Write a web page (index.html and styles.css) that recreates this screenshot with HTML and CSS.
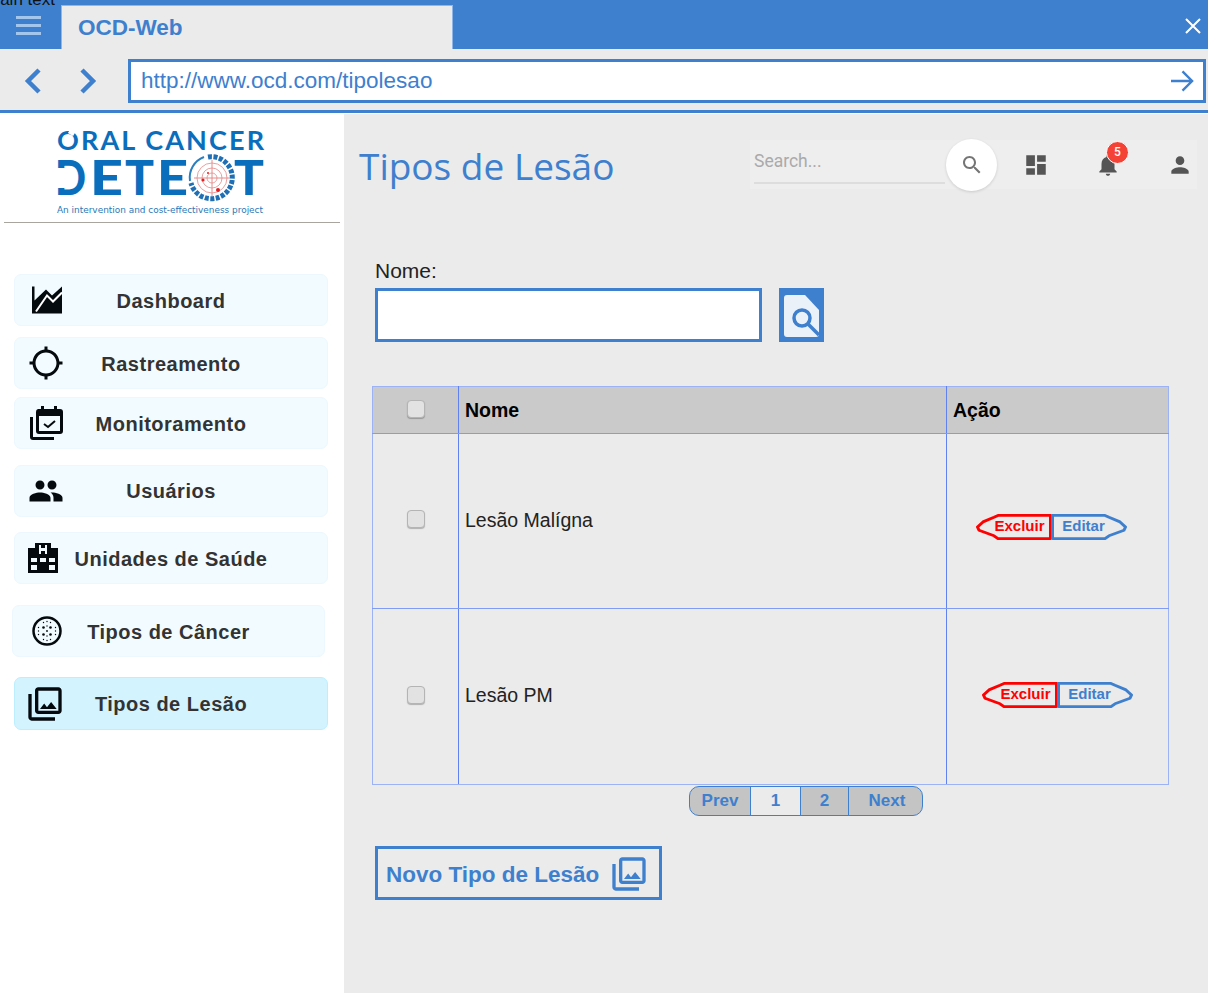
FILE: index.html
```html
<!DOCTYPE html>
<html lang="pt">
<head>
<meta charset="utf-8">
<title>OCD-Web</title>
<link rel="stylesheet" href="styles.css">
</head>
<body>
<span class="stray">Main text</span>
<header class="topbar">
  <button class="burger" aria-label="Menu"><span></span><span></span><span></span></button>
  <div class="tab">OCD-Web</div>
  <svg class="close" viewBox="0 0 16 16"><path d="M1 1l14 14M15 1L1 15"/></svg>
</header>
<div class="addressbar">
  <svg class="chev" viewBox="0 0 20 28"><path d="M16 3L5 14l11 11"/></svg>
  <svg class="chev chev-next" viewBox="0 0 20 28"><path d="M4 3l11 11L4 25"/></svg>
  <div class="url">
    <span>http://www.ocd.com/tipolesao</span>
    <svg class="go" viewBox="0 0 24 24"><path d="M0 12h22M12 2l10 10-10 10"/></svg>
  </div>
</div>
<div class="layout">
  <aside class="sidebar">
    <div class="logo">
      <svg viewBox="0 0 344 109" width="344" height="109">
        <text class="logo-a" x="57" y="37" textLength="207" lengthAdjust="spacing">ORAL CANCER</text>
        <rect x="69" y="16" width="6" height="6" fill="#fff" transform="rotate(30 72 19)"/>
        <text class="logo-b" x="55" y="82" textLength="31" lengthAdjust="spacingAndGlyphs">D</text>
        <text class="logo-b" x="90" y="82" textLength="33" lengthAdjust="spacingAndGlyphs">E</text>
        <text class="logo-b" x="125" y="82" textLength="29" lengthAdjust="spacingAndGlyphs">T</text>
        <text class="logo-b" x="157" y="82" textLength="31" lengthAdjust="spacingAndGlyphs">E</text>
        <text class="logo-b" x="234" y="82" textLength="30" lengthAdjust="spacingAndGlyphs">T</text>
        <rect x="55" y="55" width="12" height="20" fill="#fff"/>
        <circle cx="212" cy="65" r="24" fill="#fff"/>
        <path d="M190 68a22 22 0 0 1 14-24" fill="none" stroke="#2a7fc0" stroke-width="2"/>
        <path d="M208 44a21 21 0 1 1-17 26" fill="none" stroke="#1f6fb5" stroke-width="5" stroke-dasharray="4 1.500"/>
        <circle cx="212" cy="65" r="15" fill="#fff" stroke="#e8a0a0"/>
        <circle cx="212" cy="65" r="10" fill="none" stroke="#e8a0a0"/>
        <circle cx="212" cy="65" r="5" fill="none" stroke="#e8a0a0"/>
        <path d="M194 65h36M212 47v36" stroke="#e88a8a" stroke-width="1"/>
        <circle cx="203" cy="67" r="1.600" fill="#e02020"/>
        <circle cx="208" cy="60" r="1" fill="#e02020"/>
        <circle cx="218" cy="77" r="2" fill="#e02020"/>
        <text class="logo-c" x="57" y="100" textLength="206" lengthAdjust="spacingAndGlyphs">An intervention and cost-effectiveness project</text>
      </svg>
    </div>
    <nav class="nav">
      <a class="item item-dashboard">
        <svg class="ico ico-30" viewBox="0 0 30 27"><path d="M0 0h2.500v14L14 3l6 6L30 0v27H0z"/><path class="cut" d="M4 25L15 9l6 6 9-9"/></svg>
        <span>Dashboard</span>
      </a>
      <a class="item item-track">
        <svg class="ico ico-36" viewBox="0 0 24 24"><path d="M20.940 11c-.46-4.170-3.770-7.480-7.940-7.940V1h-2v2.060C6.830 3.520 3.520 6.830 3.060 11H1v2h2.060c.46 4.170 3.770 7.480 7.940 7.940V23h2v-2.060c4.170-.46 7.480-3.770 7.940-7.940H23v-2h-2.060zM12 19c-3.870 0-7-3.130-7-7s3.130-7 7-7 7 3.130 7 7-3.130 7-7 7z"/></svg>
        <span>Rastreamento</span>
      </a>
      <a class="item item-monitor">
        <svg class="ico ico-34" viewBox="0 0 34 34"><path d="M8 3h3V0h3v3h10V0h3v3h3a3 3 0 0 1 3 3v19a3 3 0 0 1-3 3H9a3 3 0 0 1-3-3V6a3 3 0 0 1 2-3z"/><rect class="hole" x="9" y="10" width="21" height="15"/><path class="tick" d="M14 18l4 3 7-6"/><path d="M0 11h3v20h21v3H3a3 3 0 0 1-3-3z"/></svg>
        <span>Monitoramento</span>
      </a>
      <a class="item item-users">
        <svg class="ico ico-36" viewBox="0 0 24 24"><path d="M16 11c1.660 0 2.990-1.340 2.990-3S17.660 5 16 5c-1.660 0-3 1.340-3 3s1.340 3 3 3zm-8 0c1.660 0 2.990-1.340 2.990-3S9.660 5 8 5C6.340 5 5 6.340 5 8s1.340 3 3 3zm0 2c-2.330 0-7 1.170-7 3.500V19h14v-2.500c0-2.330-4.670-3.500-7-3.500zm8 0c-.29 0-.62.02-.97.05 1.160.84 1.970 1.970 1.970 3.450V19h6v-2.500c0-2.330-4.670-3.500-7-3.500z"/></svg>
        <span>Usuários</span>
      </a>
      <a class="item item-units">
        <svg class="ico ico-30" viewBox="0 0 30 30"><path d="M7 0h16v5h7v25H0V5h7z"/><path class="hole" d="M11 2h2v3h4V2h2v9h-2V8h-4v3h-2zM3 15h6v4H3zM12 15h6v4h-6zM21 15h6v4h-6zM3 22h6v5H3zM21 22h6v5h-6z"/></svg>
        <span>Unidades de Saúde</span>
      </a>
      <a class="item item-cancer">
        <svg class="ico ico-30" viewBox="0 0 30 30"><circle class="ring" cx="15" cy="15" r="13.500"/><g class="dots"><circle cx="11.500" cy="11.500" r="1.300"/><circle cx="18.500" cy="11.500" r="1.300"/><circle cx="11.500" cy="18.500" r="1.300"/><circle cx="18.500" cy="18.500" r="1.300"/><circle cx="15" cy="5.500" r=".7"/><circle cx="11.500" cy="6.500" r=".7"/><circle cx="18.500" cy="6.500" r=".7"/><circle cx="15" cy="15" r=".9"/><circle cx="6.500" cy="11.500" r=".7"/><circle cx="23.500" cy="11.500" r=".7"/><circle cx="6.500" cy="15" r=".7"/><circle cx="23.500" cy="15" r=".7"/><circle cx="6.500" cy="18.500" r=".7"/><circle cx="23.500" cy="18.500" r=".7"/><circle cx="15" cy="24.500" r=".7"/><circle cx="11.500" cy="23.500" r=".7"/><circle cx="18.500" cy="23.500" r=".7"/><circle cx="15" cy="10" r=".7"/><circle cx="15" cy="20" r=".7"/></g></svg>
        <span>Tipos de Câncer</span>
      </a>
      <a class="item item-lesion">
        <svg class="ico ico-40" viewBox="0 0 24 24"><path d="M20 4v12H8V4h12m0-2H8c-1.100 0-2 .9-2 2v12c0 1.100.9 2 2 2h12c1.100 0 2-.9 2-2V4c0-1.100-.9-2-2-2zm-8.500 9.670l1.690 2.260 2.480-3.100L19 15H9zM2 6v14c0 1.100.9 2 2 2h14v-2H4V6H2z"/></svg>
        <span>Tipos de Lesão</span>
      </a>
    </nav>
  </aside>
  <main class="main">
    <div class="head">
      <h1 class="title">Tipos de Lesão</h1>
      <div class="tools">
        <input class="search" type="text" placeholder="Search...">
        <button class="search-btn" aria-label="Search"><svg viewBox="0 0 24 24"><path d="M15.500 14h-.790l-.280-.270C15.410 12.590 16 11.110 16 9.500 16 5.910 13.090 3 9.500 3S3 5.910 3 9.500 5.910 16 9.500 16c1.610 0 3.090-.590 4.230-1.570l.270.280v.790l5 4.990L20.490 19l-4.990-5zm-6 0C7.010 14 5 11.990 5 9.500S7.010 5 9.500 5 14 7.010 14 9.500 11.990 14 9.500 14z"/></svg></button>
        <button class="tool tool-first" aria-label="Painel"><svg viewBox="0 0 24 24"><path d="M3 13h8V3H3v10zm0 8h8v-6H3v6zm10 0h8V11h-8v10zm0-18v6h8V3h-8z"/></svg></button>
        <button class="tool" aria-label="Notificações"><svg viewBox="0 0 24 24"><path d="M12 22c1.100 0 2-.9 2-2h-4c0 1.100.89 2 2 2zm6-6v-5c0-3.070-1.640-5.640-4.500-6.320V4c0-.83-.67-1.500-1.500-1.500s-1.500.67-1.500 1.500v.68C7.630 5.360 6 7.920 6 11v5l-2 2v1h16v-1l-2-2z"/></svg><span class="badge">5</span></button>
        <button class="tool" aria-label="Perfil"><svg viewBox="0 0 24 24"><path d="M12 12c2.210 0 4-1.790 4-4s-1.790-4-4-4-4 1.790-4 4 1.790 4 4 4zm0 2c-2.670 0-8 1.340-8 4v2h16v-2c0-2.660-5.330-4-8-4z"/></svg></button>
      </div>
    </div>
    <form class="filter">
      <label class="filter-label" for="nome">Nome:</label>
      <div class="filter-row">
        <input class="filter-input" id="nome" type="text">
        <button class="filter-btn" type="button" aria-label="Buscar">
          <svg viewBox="0 0 45 54"><path class="doc" d="M8 7h18l14 15v24a3 3 0 0 1-3 3H8a3 3 0 0 1-3-3V10a3 3 0 0 1 3-3z"/><circle class="lens" cx="23" cy="30" r="8"/><path class="lens" d="M29 36l11 11"/></svg>
        </button>
      </div>
    </form>
    <table class="grid">
      <colgroup><col class="col-a"><col class="col-b"><col class="col-c"></colgroup>
      <thead>
        <tr><th class="check"><input type="checkbox" class="box"></th><th>Nome</th><th>Ação</th></tr>
      </thead>
      <tbody>
        <tr>
          <td class="check"><input type="checkbox" class="box"></td>
          <td>Lesão Malígna</td>
          <td class="acts acts-one">
            <div class="act-row">
              <a class="act act-del"><svg viewBox="0 0 76 28" preserveAspectRatio="none"><path d="M1.500 14L7 8.500 18 3.500 22 1.500H74.500V26.500H22L18 23.500 3 17.500z"/></svg><span>Excluir</span></a>
              <a class="act act-edit"><svg viewBox="0 0 76 28" preserveAspectRatio="none"><path d="M74.500 14L69 8.500 58 3.500 54 1.500H1.500V26.500H54L58 23.500 73 17.500z"/></svg><span>Editar</span></a>
            </div>
          </td>
        </tr>
        <tr class="row-last">
          <td class="check"><input type="checkbox" class="box"></td>
          <td>Lesão PM</td>
          <td class="acts acts-two">
            <div class="act-row">
              <a class="act act-del"><svg viewBox="0 0 76 28" preserveAspectRatio="none"><path d="M1.500 14L7 8.500 18 3.500 22 1.500H74.500V26.500H22L18 23.500 3 17.500z"/></svg><span>Excluir</span></a>
              <a class="act act-edit"><svg viewBox="0 0 76 28" preserveAspectRatio="none"><path d="M74.500 14L69 8.500 58 3.500 54 1.500H1.500V26.500H54L58 23.500 73 17.500z"/></svg><span>Editar</span></a>
            </div>
          </td>
        </tr>
      </tbody>
    </table>
    <div class="pager">
      <a class="pg pg-prev">Prev</a>
      <a class="pg pg-1">1</a>
      <a class="pg pg-2">2</a>
      <a class="pg pg-next">Next</a>
    </div>
    <a class="new">
      <span>Novo Tipo de Lesão</span>
      <svg viewBox="0 0 24 24"><path d="M20 4v12H8V4h12m0-2H8c-1.100 0-2 .9-2 2v12c0 1.100.9 2 2 2h12c1.100 0 2-.9 2-2V4c0-1.100-.9-2-2-2zm-8.500 9.670l1.690 2.260 2.480-3.100L19 15H9zM2 6v14c0 1.100.9 2 2 2h14v-2H4V6H2z"/></svg>
    </a>
  </main>
</div>
</body>
</html>
```
FILE: styles.css
```css
* { box-sizing: border-box; }
html, body { margin: 0; height: 100%; }
body {
  font-family: "Liberation Sans", Arial, sans-serif;
  background: #fff;
  color: #222;
  overflow: hidden;
  display: flex;
  flex-direction: column;
}
button { border: 0; background: none; padding: 0; font: inherit; }

.stray {
  position: absolute;
  left: -14px;
  top: -10px;
  font-size: 17px;
  line-height: 20px;
  color: #111;
  white-space: nowrap;
  z-index: 0;
}

.topbar {
  height: 49px;
  flex: none;
  background: #3e80ce;
  display: flex;
  align-items: flex-end;
}
.burger {
  width: 61px;
  height: 49px;
  padding: 16px 20px 14px 16px;
  display: flex;
  flex-direction: column;
  justify-content: space-between;
}
.burger span { display: block; height: 3px; background: #a4c5ec; }
.tab {
  position: relative;
  z-index: 1;
  width: 392px;
  height: 44px;
  background: #ebebeb;
  border: 1px solid #8fb6e6;
  border-bottom: 0;
  padding-left: 16px;
  font-size: 22.500px;
  font-weight: 700;
  line-height: 43px;
  color: #3e80ce;
}
.close {
  width: 16px;
  height: 16px;
  margin: 0 7px 15px auto;
  fill: none;
  stroke: #fff;
  stroke-width: 2;
}

.addressbar {
  height: 64px;
  flex: none;
  background: #ebebeb;
  border-bottom: 3px solid #3e80ce;
  display: flex;
  align-items: flex-start;
  padding: 10px 2px 0 23px;
}
.chev {
  width: 20px;
  height: 28px;
  margin-top: 8px;
  fill: none;
  stroke: #3e80ce;
  stroke-width: 4.500;
}
.chev-next { margin-left: 35px; }
.url {
  margin-left: 30px;
  flex: 1;
  height: 44px;
  background: #fff;
  border: 3px solid #3e80ce;
  display: flex;
  align-items: center;
  justify-content: space-between;
  padding: 0 9px 0 10px;
  font-size: 22.500px;
  color: #3e80ce;
}
.go {
  width: 23px;
  height: 24px;
  fill: none;
  stroke: #3e80ce;
  stroke-width: 2.500;
}

.layout { flex: 1; display: flex; min-height: 0; }

.sidebar { width: 344px; flex: none; background: #fff; }
.logo {
  height: 110px;
  margin: 0 4px 0 4px;
  border-bottom: 1px solid #a8a49e;
  overflow: hidden;
}
.logo svg { display: block; margin-left: -4px; }
.logo-a { font: 700 27px Lato, sans-serif; fill: #0a6ebd; }
.logo-b { font: 900 48px Lato, sans-serif; fill: #0a6ebd; }
.logo-c { font: 400 9.500px "DejaVu Sans", sans-serif; fill: #2a78b8; }

.nav { display: flex; flex-direction: column; padding: 51px 16px 0 14px; }
.item {
  height: 52px;
  background: #f2fbff;
  border: 1px solid #ecf8fe;
  border-radius: 7px;
  display: grid;
  grid-template-columns: 1fr auto 1fr;
  align-items: center;
  font-size: 20px;
  font-weight: 700;
  letter-spacing: .5px;
  color: #333;
}
.item span { grid-column: 2; white-space: nowrap; padding-top: 2px; }
.ico { grid-column: 1; grid-row: 1; display: block; fill: #050a0e; }
.ico-30 { width: 30px; height: 30px; margin-left: 16px; }
.ico-34 { width: 34px; height: 34px; margin-left: 15px; }
.ico-36 { width: 36px; height: 36px; margin-left: 13px; }
.ico-40 { width: 40px; height: 40px; margin-left: 10px; }
.cut { fill: none; stroke: #fff; stroke-width: 2; }
.hole { fill: #f2fbff; }
.tick { fill: none; stroke: #050a0e; stroke-width: 2; }
.ring { fill: none; stroke: #050a0e; stroke-width: 2.500; }
.dots circle { fill: #050a0e; }

.item-dashboard .ico { margin-left: 17px; }
.item-track { margin-top: 11px; }
.item-monitor { margin-top: 8px; }
.item-users { margin-top: 16px; }
.item-users span { padding-top: 0; }
.item-units { margin-top: 15px; }
.item-units .ico { margin-left: 13px; }
.item-cancer { margin: 21px 3px 0 -2px; }
.item-cancer .ico { margin-left: 19px; }
.item-lesion {
  margin-top: 20px;
  height: 53px;
  background: #d3f3ff;
  border-color: #bdeeff;
}

.main {
  flex: 1;
  min-width: 0;
  background: #ebebeb;
  padding: 26px 0 0 28px;
  margin-top: 1px;
}
.head { display: flex; align-items: flex-start; margin-left: -13px; }
.title {
  margin: 0;
  padding-top: 1px;
  font: 400 37px/50px "Open Sans", sans-serif;
  color: #3e80ce;
}
.tools {
  margin-left: auto;
  margin-right: 11px;
  width: 447px;
  height: 49px;
  background: #eee;
  display: flex;
  align-items: center;
  padding-left: 4px;
}
.search {
  width: 191px;
  height: 44px;
  align-self: flex-start;
  border: 0;
  border-bottom: 2px solid #ddd;
  background: transparent;
  padding: 0;
  font: 400 17.500px Roboto, sans-serif;
  outline: 0;
}
.search::placeholder { color: #aaa; opacity: 1; }
.search-btn {
  flex: none;
  width: 51px;
  height: 52px;
  margin-left: 1px;
  border-radius: 50%;
  background: #fff;
  box-shadow: 0 1px 3px rgba(0,0,0,.14);
  display: flex;
  align-items: center;
  justify-content: center;
}
.search-btn svg { width: 24px; height: 24px; fill: #757575; }
.tool {
  flex: none;
  width: 26px;
  height: 26px;
  margin-left: 46px;
  position: relative;
}
.tool-first { margin-left: 26px; }
.tool svg { display: block; width: 26px; height: 26px; fill: #555; }
.badge {
  position: absolute;
  left: 11px;
  top: -11px;
  width: 23px;
  height: 23px;
  border-radius: 50%;
  background: #f44336;
  border: 1px solid #fff;
  color: #fff;
  font: 500 12px/21px Roboto, sans-serif;
  text-align: center;
}

.filter { margin: 68px 0 0 3px; }
.filter-label { display: block; font-size: 21px; line-height: 24px; color: #222; }
.filter-row { display: flex; margin-top: 5px; }
.filter-input {
  width: 387px;
  height: 54px;
  border: 3px solid #3e80ce;
  background: #fff;
  outline: 0;
}
.filter-btn { margin-left: 17px; width: 45px; height: 54px; background: #3e80ce; }
.filter-btn svg { display: block; width: 45px; height: 54px; }
.doc { fill: #ebf1f8; }
.lens { fill: none; stroke: #3e80ce; stroke-width: 3.500; }

.grid {
  margin-top: 44px;
  table-layout: fixed;
  width: 796px;
  border-collapse: collapse;
  font-size: 19.500px;
}
.col-a { width: 86px; }
.col-b { width: 488px; }
.col-c { width: 222px; }
.grid th, .grid td {
  border: 1px solid #7f9cf5;
  border-left-color: #5f82f0;
  border-right-color: #5f82f0;
  padding: 0 0 0 6px;
  text-align: left;
}
.grid tr > :first-child { border-left-color: #9db2f5; }
.grid tr > :last-child { border-right-color: #9db2f5; }
.grid thead tr > * { border-top-color: #9db2f5; }
.grid tbody tr:last-child > * { border-bottom-color: #9db2f5; }
.grid th { height: 47px; background: #cacaca; color: #000; font-weight: 700; }
.grid td { height: 175px; color: #222; }
.grid .row-last td { height: 176px; }
.grid tbody td { padding-bottom: 2px; }
.grid th.check { text-align: center; padding: 0 0 3px; }
.grid td.check { text-align: center; padding: 0 0 4px; }
.box {
  appearance: none;
  display: block;
  margin: 0 auto;
  width: 18px;
  height: 18px;
  background: #e2e2e2;
  border: 1px solid #b4b4b4;
  border-radius: 4px;
  box-shadow: 0 1px 1px rgba(0,0,0,.25);
}
.grid td.acts-one { padding: 11px 13px 0 0; }
.grid td.acts-two { padding: 0 1px 4px 0; }
.act-row { display: flex; justify-content: center; }
.act {
  position: relative;
  width: 76px;
  height: 26px;
  display: flex;
  align-items: center;
  justify-content: center;
  font-size: 15px;
  font-weight: 700;
}
.act span { position: relative; padding-bottom: 2px; }
.act svg { position: absolute; inset: 0; width: 76px; height: 26px; fill: none; stroke-width: 3; stroke-linejoin: round; }
.act-del { color: #f00; }
.act-del span { margin-left: 12px; }
.act-del svg { stroke: #f00; }
.act-edit { color: #3e80ce; margin-left: -1px; }
.act-edit span { margin-right: 10px; }
.act-edit svg { stroke: #3e80ce; }

.pager {
  margin: 1px 0 0 317px;
  width: 234px;
  height: 30px;
  display: flex;
  border: 1px solid #3e80ce;
  border-radius: 10px;
  overflow: hidden;
  background: #c4c4c4;
  font-size: 17px;
  font-weight: 700;
  color: #3e80ce;
}
.pg { display: flex; align-items: center; justify-content: center; border-right: 1px solid #3e80ce; }
.pg-prev { width: 61px; }
.pg-1 { width: 50px; background: #ebebeb; }
.pg-2 { width: 48px; }
.pg-next { flex: 1; border-right: 0; padding-left: 3px; }

.new {
  margin: 30px 0 0 3px;
  width: 287px;
  height: 54px;
  border: 3px solid #3e80ce;
  display: flex;
  align-items: center;
  padding: 2px 0 0 8px;
  font-size: 22.500px;
  font-weight: 700;
  color: #3e80ce;
}
.new span { padding-top: 2px; }
.new svg { width: 40px; height: 40px; margin-left: 10px; fill: #3e80ce; }
```
